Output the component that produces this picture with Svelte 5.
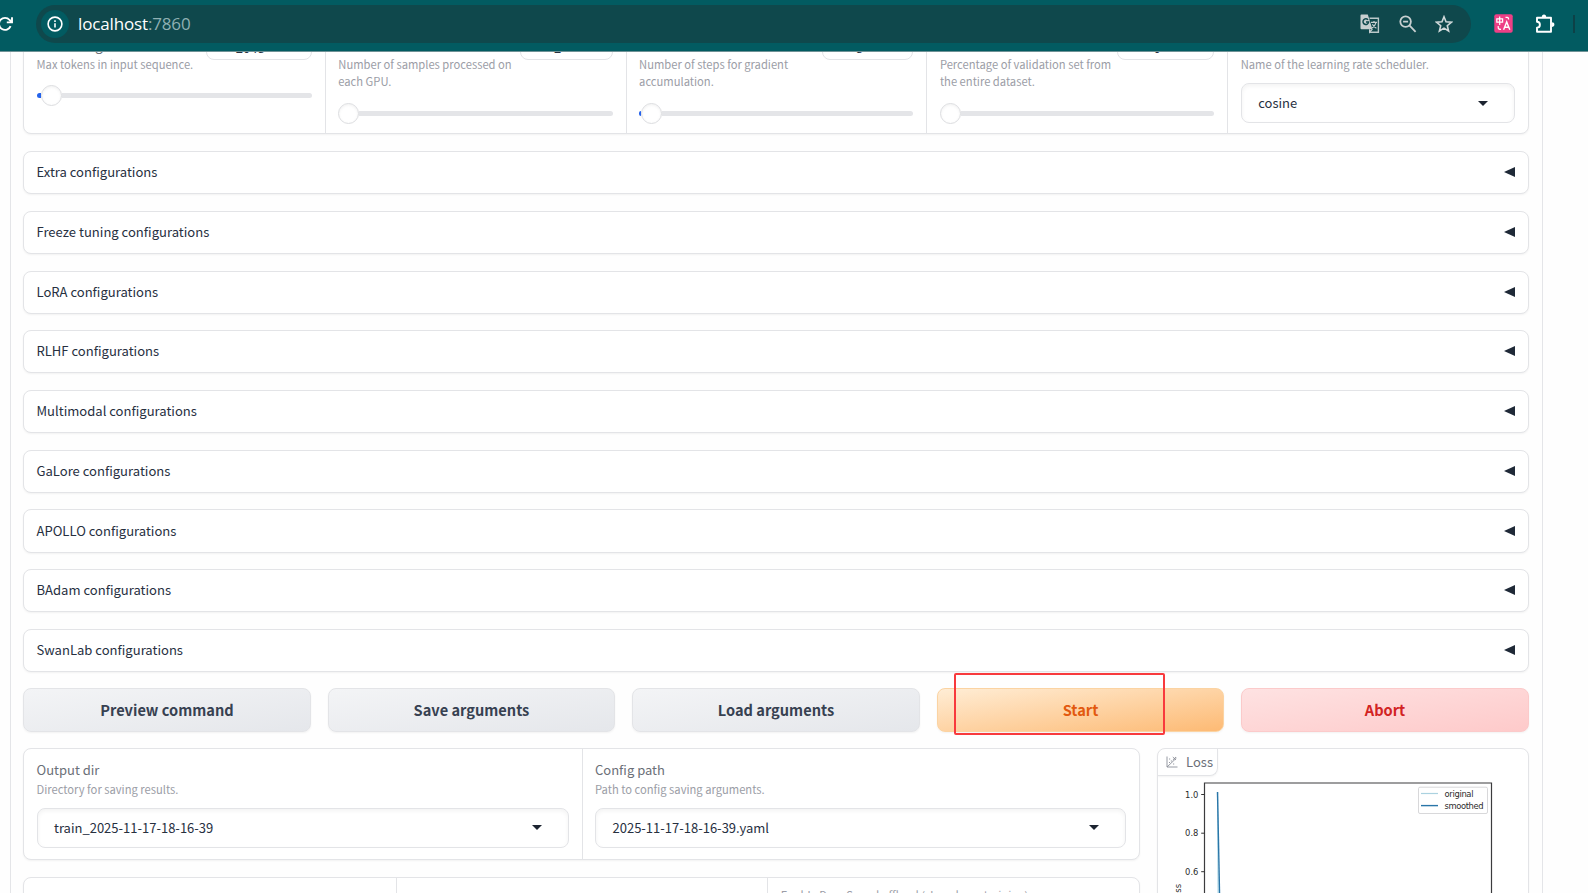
<script lang="ts">
  type Slider = {
    label: string;
    info: string;
    value: string;
    width: number;
    fill: number;
  };

  const sliders: Slider[] = [
    { label: "Cutoff length", info: "Max tokens in input sequence.", value: "2048", width: 106, fill: 4 },
    { label: "Batch size", info: "Number of samples processed on each GPU.", value: "2", width: 93, fill: 0 },
    { label: "Gradient accumulation", info: "Number of steps for gradient accumulation.", value: "8", width: 91, fill: 2 },
    { label: "Val size", info: "Percentage of validation set from the entire dataset.", value: "0", width: 97, fill: 0 },
  ];

  const accordions = [
    "Extra",
    "Freeze tuning",
    "LoRA",
    "RLHF",
    "Multimodal",
    "GaLore",
    "APOLLO",
    "BAdam",
    "SwanLab",
  ];

  const actions = [
    { label: "Preview command", variant: "secondary" },
    { label: "Save arguments", variant: "secondary" },
    { label: "Load arguments", variant: "secondary" },
    { label: "Start", variant: "primary" },
    { label: "Abort", variant: "stop" },
  ];

  const paths = [
    { label: "Output dir", info: "Directory for saving results.", value: "train_2025-11-17-18-16-39" },
    { label: "Config path", info: "Path to config saving arguments.", value: "2025-11-17-18-16-39.yaml" },
  ];

  const ticks = [
    { label: "1.0", y: 18.5 },
    { label: "0.8", y: 57.2 },
    { label: "0.6", y: 95.7 },
  ];
</script>

<div class="window">
  <header class="toolbar">
    <svg class="reload" width="14" height="16" viewBox="0 0 14 16" fill="none" stroke="#fff" stroke-width="1.9">
      <path d="M10.6 10.1A6 6 0 1 1 9.6 4L11.6 6" />
      <path d="M12 1.2V6.4H6.8" />
    </svg>

    <div class="address">
      <span class="site-info">
        <svg width="16" height="16" viewBox="0 0 16 16" fill="none" stroke="#fff" stroke-width="1.6">
          <circle cx="8" cy="8" r="6.9" />
          <path d="M8 7.2V11.6M8 4.3V6" />
        </svg>
      </span>
      <span class="url">localhost<span class="port">:7860</span></span>
      <div class="address-icons">
        <svg width="20" height="20" viewBox="0 0 20 20">
          <path d="M9.5 4.2H18.4V18.2H10" fill="none" stroke="#b9c8c9" stroke-width="1.4" />
          <path d="M1.5 .5H7.8L12.4 15.2H1.5A1 1 0 0 1 .5 14.2V1.5A1 1 0 0 1 1.5 .5Z" fill="#c7cfd0" />
          <path d="M8 5.9A2.8 2.8 0 1 0 8.6 8H6" fill="none" stroke="#0f484c" stroke-width="1.5" />
          <path d="M11 8.4H17M14 7V8.4M16 8.6C15.4 11 13.8 12.8 12 14M12.4 10.2C13.5 12.2 15 13.4 16.4 14.2M12.4 15.2L9.6 18.2V15.2" fill="none" stroke="#c7cfd0" stroke-width="1.2" />
        </svg>
        <svg width="18" height="18" viewBox="0 0 18 18" fill="none" stroke="#c7cfd0" stroke-width="1.8">
          <circle cx="6.6" cy="6.6" r="5.3" />
          <path d="M10.4 10.4L16.6 16.8M4.1 6.6H9.1" />
        </svg>
        <svg width="18" height="18" viewBox="0 0 18 18" fill="none" stroke="#d0d9da" stroke-width="1.6">
          <path d="M9 1.8L11 6.8L16.5 7.2L12.3 10.7L13.6 16L9 13.1L4.4 16L5.7 10.7L1.5 7.2L7 6.8Z" />
        </svg>
      </div>
    </div>

    <svg class="translate" width="19" height="19" viewBox="0 0 19 19" fill="none">
      <rect x=".3" y=".3" width="18.4" height="18.4" rx="2" fill="#ee3f86" />
      <path d="M2.8 4.8H8.6V8.2H2.8ZM5.7 2.6V11" stroke="#fff" stroke-width="1.2" />
      <path d="M9.6 15.8L12.7 8L15.8 15.8M10.7 13.3H14.7" stroke="#fff" stroke-width="1.4" />
      <path d="M11.5 3.3H13.3Q14.6 3.3 14.6 5.6M4.2 12.1V13.4Q4.2 15.4 7 15.4" stroke="#fff" stroke-width="1.2" />
    </svg>
    <svg class="extensions" width="20" height="20" viewBox="0 0 20 20">
      <path d="M2 3.7H16V17.7H2V13.6A2.9 2.9 0 0 0 2 7.8Z" fill="none" stroke="#fff" stroke-width="1.9" stroke-linejoin="round" />
      <path d="M6.8 3.2A2.2 2.7 0 0 1 11.2 3.2ZM16.7 8.2A2.7 2.4 0 0 1 16.7 13Z" fill="#fff" />
    </svg>
    <span class="separator"></span>
  </header>

  <main class="viewport">
    <div class="tab-content">
      <section class="panel hyperparams">
        {#each sliders as s}
          <div class="cell">
            <div class="head">
              <div class="head-text">
                <div class="label">{s.label}</div>
                <div class="info">{s.info}</div>
              </div>
              <div class="number" style="width: {s.width}px">{s.value}</div>
            </div>
            <div class="slider">
              <span class="fill" style="width: {s.fill}px"></span>
              <span class="thumb"></span>
              <span class="track"></span>
            </div>
          </div>
        {/each}
        <div class="cell">
          <div class="head-text full">
            <div class="label">LR scheduler</div>
            <div class="info">Name of the learning rate scheduler.</div>
          </div>
          <div class="select">
            <span>cosine</span>
            <i class="caret"></i>
          </div>
        </div>
      </section>

      {#each accordions as name}
        <section class="panel accordion">
          <span>{name} configurations</span>
          <i class="arrow"></i>
        </section>
      {/each}

      <div class="actions">
        {#each actions as a}
          <button class={a.variant}>{a.label}</button>
        {/each}
        <div class="highlight"></div>
      </div>

      <div class="results">
        <div class="left">
          <section class="panel paths">
            {#each paths as p}
              <div class="cell">
                <div class="label">{p.label}</div>
                <div class="info">{p.info}</div>
                <div class="select">
                  <span>{p.value}</span>
                  <i class="caret"></i>
                </div>
              </div>
            {/each}
          </section>
          <section class="panel devices">
            <div class="cell"><div class="label">Device count</div></div>
            <div class="cell"><div class="label">DeepSpeed stage</div></div>
            <div class="cell">
              <div class="info">Enable DeepSpeed offload (slow down training).</div>
            </div>
          </section>
        </div>

        <section class="panel plot">
          <div class="plot-tag">
            <svg width="12" height="12" viewBox="0 0 12 12" fill="none" stroke="#8b8e98" stroke-width=".9">
              <path d="M1 .5V11H11.5M1 11L10.5 2M6.8 1L10 4M10 1L6.8 4" />
              <path d="M3 3H4.2M4.8 5H6M7 8H8.2M3 6.5H4" />
            </svg>
            <span>Loss</span>
          </div>
          <svg class="chart" width="371" height="140" viewBox="0 0 371 140">
            <path d="M59.6 16L60.2 140" stroke="#b5dcea" stroke-width="1.3" fill="none" />
            <path d="M59.5 16L62 140" stroke="#2a76a8" stroke-width="1.4" fill="none" />
            <path d="M46.5 140V7H333.5V140" stroke="#3c3c3e" stroke-width="1.2" fill="none" />
            {#each ticks as t}
              <path d="M43.2 {t.y}H46.5" stroke="#333" stroke-width="1" />
              <text x="40.4" y={t.y + 3.2} text-anchor="end">{t.label}</text>
            {/each}
            <text transform="translate(23.3 108) rotate(-90)" text-anchor="end">Loss</text>
            <rect x="260.5" y="11.2" width="69" height="26.3" rx="1.5" fill="#fff" stroke="#d8d8da" />
            <path d="M263 17.5H280" stroke="#abd2e0" stroke-width="1.2" />
            <path d="M263 29.6H280" stroke="#2a76a8" stroke-width="1.4" />
            <text x="286.5" y="20.8" textLength="29">original</text>
            <text x="286.5" y="32.5" textLength="39">smoothed</text>
          </svg>
        </section>
      </div>
    </div>
  </main>
</div>

<style>
  :global(body) {
    margin: 0;
    background: #fefefe;
  }

  .window {
    height: 893px;
    overflow: hidden;
    display: flex;
    flex-direction: column;
    font-family: "Noto Sans CJK SC", "Open Sans", sans-serif;
    color: #27303f;
  }

  .toolbar {
    box-sizing: border-box;
    height: 52px;
    flex: none;
    display: flex;
    align-items: center;
    padding-bottom: 4px;
    background: #025b61;
    border-bottom: 1px solid #6f9296;
  }

  .reload {
    margin-right: 22px;
  }

  .address {
    width: 1435px;
    height: 38px;
    border-radius: 19px;
    background: #0f484c;
    display: flex;
    align-items: center;
  }

  .site-info {
    width: 28px;
    height: 28px;
    margin-left: 5px;
    border-radius: 50%;
    background: #025b61;
    display: flex;
    align-items: center;
    justify-content: center;
  }

  .url {
    margin-left: 9px;
    font-family: "Open Sans", "Noto Sans", sans-serif;
    font-size: 17px;
    letter-spacing: -0.15px;
    color: #fff;
  }

  .port {
    color: #8fb0b3;
  }

  .address-icons {
    display: flex;
    align-items: center;
    gap: 18.5px;
    margin-left: auto;
    margin-right: 18px;
  }

  .translate {
    margin-left: 22.5px;
  }

  .extensions {
    margin-left: 22.5px;
  }

  .separator {
    width: 2px;
    height: 18px;
    margin-left: 18px;
    background: #0d4147;
  }

  .viewport {
    flex: 1;
    min-height: 0;
    overflow: hidden;
  }

  .tab-content {
    box-sizing: border-box;
    width: 1533px;
    height: 1000px;
    margin: -34px 0 0 10px;
    padding: 0 13px 0 12px;
    border: solid #e4e5e8;
    border-width: 0 1px;
    display: flex;
    flex-direction: column;
    gap: 16.65px;
  }

  .panel {
    box-sizing: border-box;
    flex: none;
    border: 1px solid #e3e4e7;
    border-radius: 8px;
    background: #fff;
    box-shadow: 0 1px 2px rgba(0, 0, 0, 0.05);
  }

  .label {
    font-size: 13px;
    line-height: 20px;
    color: #6b6f78;
  }

  .info {
    font-size: 11.2px;
    line-height: 17.6px;
    color: #9b9da6;
  }

  .cell {
    box-sizing: border-box;
    padding: 11px 13px 0 12.5px;
    min-width: 0;
  }

  .cell + .cell {
    border-left: 1px solid #e3e4e7;
  }

  .hyperparams {
    height: 116.4px;
    display: grid;
    grid-template-columns: repeat(5, 1fr);
  }

  .head {
    display: flex;
    justify-content: space-between;
    height: 74px;
  }

  .cell:first-child .head {
    height: 56px;
  }

  .head-text {
    padding-top: 5.5px;
    width: 181px;
    white-space: nowrap;
  }

  .head-text .label {
    line-height: 19px;
    padding-bottom: 1.3px;
  }

  .head-text .info {
    white-space: normal;
  }

  .head-text.full {
    width: auto;
    padding-bottom: 0.7px;
  }

  .number {
    box-sizing: border-box;
    flex: none;
    height: 30px;
    border: 1px solid #e3e4e7;
    border-radius: 8px;
    text-align: center;
    font-size: 13px;
    line-height: 33px;
    padding-right: 17px;
  }

  .slider {
    display: flex;
    align-items: center;
    height: 21px;
    margin-top: -1px;
  }

  .fill {
    height: 5px;
    border-radius: 3px 0 0 3px;
    background: #2563eb;
  }

  .thumb {
    box-sizing: border-box;
    width: 21px;
    height: 21px;
    flex: none;
    border: 1px solid #dcdde0;
    border-radius: 50%;
    background: #fff;
    box-shadow: inset 0 1px 3px rgba(0, 0, 0, 0.06);
  }

  .track {
    flex: 1;
    height: 5px;
    border-radius: 0 3px 3px 0;
    background: #e4e5e8;
  }

  .select {
    box-sizing: border-box;
    display: flex;
    align-items: center;
    justify-content: space-between;
    height: 40px;
    margin-top: 9px;
    padding: 0 26px 0 16.5px;
    border: 1px solid #e3e4e7;
    border-radius: 8px;
    font-size: 13px;
    background: #fff;
    box-shadow: inset 0 2px 4px rgba(0, 0, 0, 0.05);
  }

  .select span {
    padding-bottom: 1px;
  }

  .caret {
    border: 5px solid transparent;
    border-top-color: #1c2430;
    border-bottom: 0;
  }

  .accordion {
    height: 43.1px;
    display: flex;
    align-items: center;
    justify-content: space-between;
    padding: 0 13px 0 12.5px;
    font-size: 13.05px;
  }

  .accordion span {
    padding-bottom: 1.8px;
  }

  .arrow {
    margin-bottom: 0.8px;
    border: 5px solid transparent;
    border-right: 11px solid #1f2937;
    border-left: 0;
  }

  .actions {
    position: relative;
    flex: none;
    display: flex;
    gap: 16.6px;
    margin-top: -0.7px;
  }

  button {
    flex: 1;
    height: 44px;
    padding: 0;
    border: 1px solid #e3e4e7;
    border-radius: 8px;
    font-family: inherit;
    font-size: 14.6px;
    font-weight: 600;
    box-shadow: 0 1px 2px rgba(0, 0, 0, 0.05);
  }

  .secondary {
    color: #374151;
    background: linear-gradient(to bottom right, #f3f4f6, #e5e7eb);
  }

  .primary {
    color: #e2590f;
    border-color: #fbd3a2;
    background: linear-gradient(to bottom right, #ffedd5, #fdba74);
  }

  .stop {
    color: #d22323;
    border-color: #fbcaca;
    background: linear-gradient(to bottom right, #fee2e2, #fecaca);
  }

  .highlight {
    position: absolute;
    top: -15px;
    left: 931px;
    box-sizing: border-box;
    width: 211px;
    height: 62px;
    border: 2px solid #f83a3d;
    border-radius: 2px;
  }

  .results {
    display: flex;
    gap: 16.6px;
    margin-top: -0.6px;
  }

  .left {
    width: 1117px;
    display: flex;
    flex-direction: column;
    gap: 16.6px;
  }

  .paths {
    height: 112px;
    display: grid;
    grid-template-columns: 1fr 1fr;
  }

  .paths .info {
    padding-top: 1.4px;
  }

  .devices {
    height: 120px;
    display: grid;
    grid-template-columns: repeat(3, 1fr);
  }

  .devices .label {
    margin-top: -1px;
  }

  .devices .info {
    margin-top: -2px;
  }

  .plot {
    flex: 1;
    height: 240px;
    overflow: hidden;
  }

  .plot-tag {
    box-sizing: border-box;
    display: flex;
    align-items: center;
    gap: 8.5px;
    width: 60px;
    height: 27px;
    padding-left: 8px;
    border: solid #e3e4e7;
    border-width: 0 1px 1px 0;
    border-radius: 0 0 8px 0;
    font-size: 13px;
    color: #6b6f78;
    box-shadow: 0 1px 2px rgba(0, 0, 0, 0.05);
  }

  .plot-tag span {
    padding-bottom: 2px;
  }

  .chart {
    display: block;
  }

  .chart text {
    font-family: "DejaVu Sans", sans-serif;
    font-size: 8.4px;
    fill: #2b2b2b;
  }
</style>
